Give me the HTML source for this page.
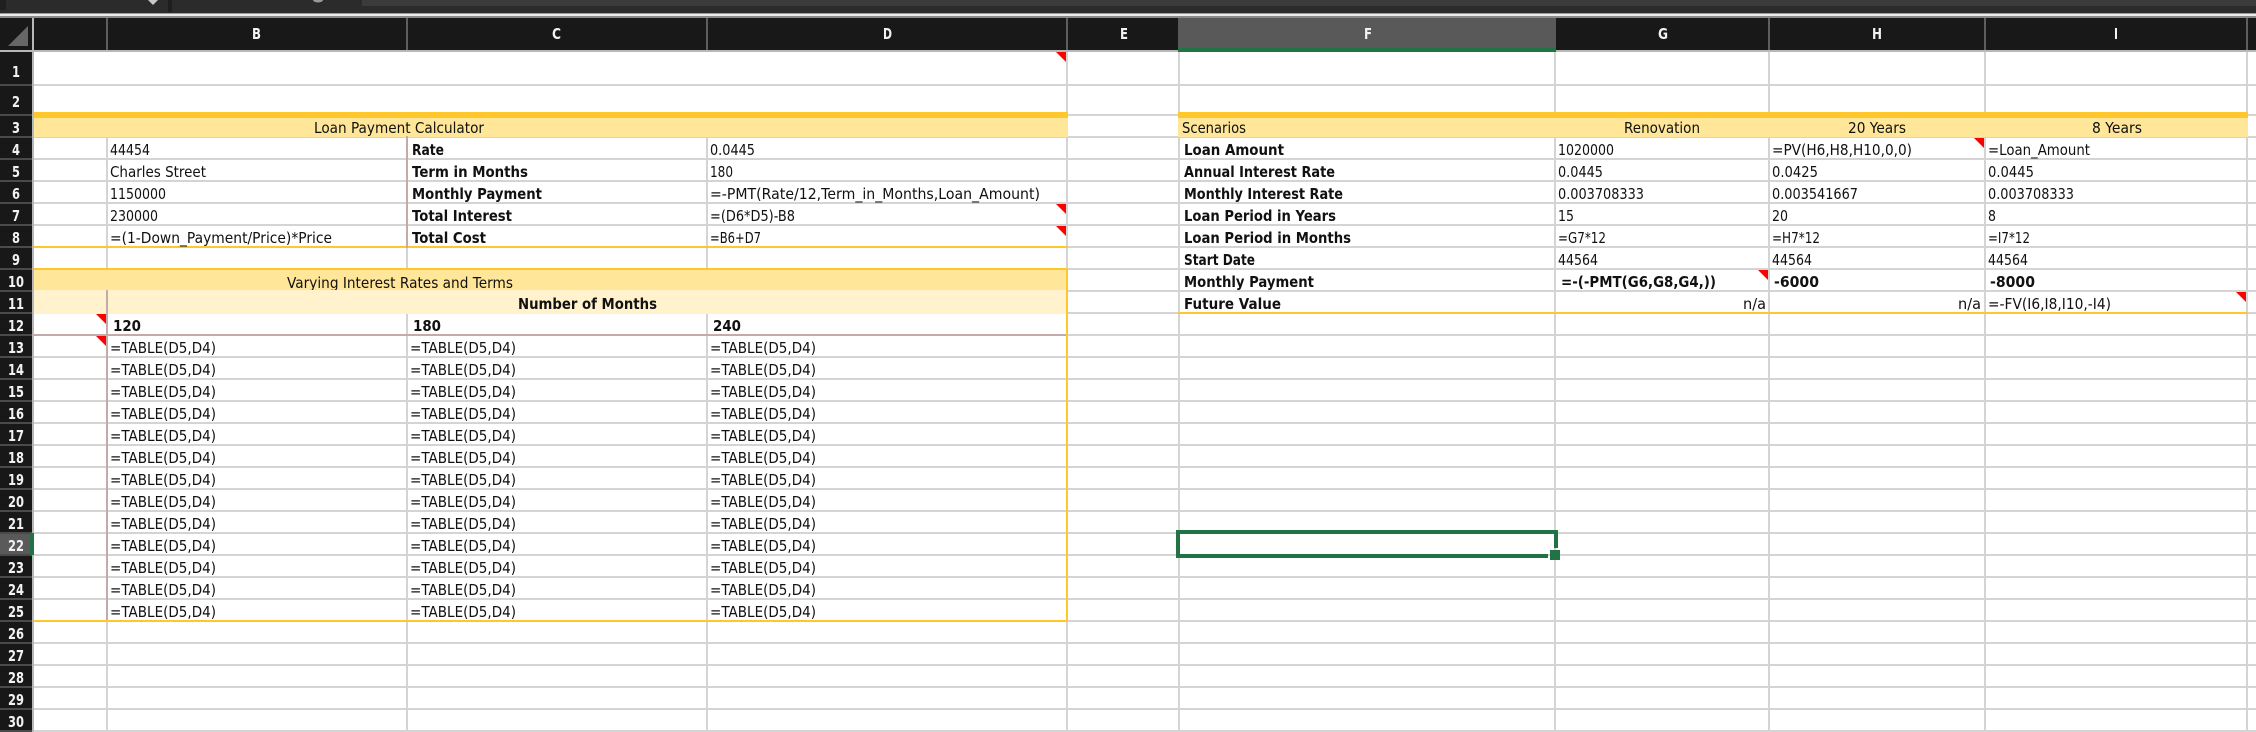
<!DOCTYPE html>
<html><head><meta charset="utf-8"><title>Loan Payment Calculator</title>
<style>
html,body{margin:0;padding:0;background:#fff;width:2256px;height:732px;overflow:hidden}
svg{display:block}
text{font-family:"DejaVu Sans","Liberation Sans",sans-serif;font-size:15px;fill:#111}
.b{font-weight:bold}
.h{font-weight:bold;fill:#f2f2f2}
</style></head><body>
<svg width="2256" height="732" viewBox="0 0 2256 732" xmlns="http://www.w3.org/2000/svg" lengthAdjust="spacingAndGlyphs">
<!-- top bar -->
<rect x="0" y="0" width="2256" height="13" fill="#2b2b2b"/>
<rect x="362" y="0" width="1894" height="6" fill="#3b3b3b"/>
<rect x="0" y="0" width="6" height="10" fill="#1f1f1f"/>
<rect x="168" y="0" width="4" height="12" fill="#1e1e1e"/>
<path d="M148 0h10l-5 5z" fill="#c8c8c8"/>
<ellipse cx="318" cy="0" rx="5" ry="2.5" fill="#999"/>
<rect x="0" y="13" width="2256" height="1" fill="#9a9a9a"/>
<rect x="0" y="14" width="2256" height="2" fill="#ececec"/>
<rect x="0" y="16" width="2256" height="2" fill="#8a8a8a"/>
<!-- col header -->
<rect x="0" y="18" width="2256" height="32" fill="#181818"/>
<rect x="1178" y="18" width="378" height="32" fill="#595959"/>
<rect x="0" y="50" width="2256" height="2" fill="#b8b8b8"/>
<rect x="1178" y="48" width="378" height="4" fill="#217346"/>
<path d="M8 46 28 26V46Z" fill="#676767"/>
<g fill="#5e5e5e">
<rect x="106" y="18" width="2" height="32"/><rect x="406" y="18" width="2" height="32"/><rect x="706" y="18" width="2" height="32"/><rect x="1066" y="18" width="2" height="32"/><rect x="1768" y="18" width="2" height="32"/><rect x="1984" y="18" width="2" height="32"/><rect x="2246" y="18" width="2" height="32"/>
</g>
<rect x="32" y="18" width="2" height="32" fill="#b8b8b8"/>
<!-- row header -->
<rect x="0" y="52" width="32" height="680" fill="#181818"/>
<rect x="32" y="52" width="2" height="680" fill="#b8b8b8"/>
<path d="M0 85H32M0 115H32M0 137H32M0 159H32M0 181H32M0 203H32M0 225H32M0 247H32M0 269H32M0 291H32M0 313H32M0 335H32M0 357H32M0 379H32M0 401H32M0 423H32M0 445H32M0 467H32M0 489H32M0 511H32M0 533H32M0 555H32M0 577H32M0 599H32M0 621H32M0 643H32M0 665H32M0 687H32M0 709H32M0 731H32" stroke="#4a4a4a" stroke-width="2" fill="none"/>
<rect x="0" y="534" width="30" height="20" fill="#5a5a5a"/>
<rect x="30" y="533" width="4" height="22" fill="#217346"/>
<!-- grid -->
<path d="M34 85H2256M34 115H2256M34 137H2256M34 159H2256M34 181H2256M34 203H2256M34 225H2256M34 247H2256M34 269H2256M34 291H2256M34 313H2256M34 335H2256M34 357H2256M34 379H2256M34 401H2256M34 423H2256M34 445H2256M34 467H2256M34 489H2256M34 511H2256M34 533H2256M34 555H2256M34 577H2256M34 599H2256M34 621H2256M34 643H2256M34 665H2256M34 687H2256M34 709H2256M34 731H2256" stroke="#d4d4d4" stroke-width="2" fill="none"/>
<path d="M107 137V732M407 137V732M707 137V732M1067 52V732M1179 52V732M1555 52V732M1769 52V732M1985 52V732M2247 52V732" stroke="#d4d4d4" stroke-width="2" fill="none"/>
<!-- fills left -->
<rect x="34" y="112" width="1034" height="6" fill="#ffc72c"/>
<rect x="34" y="118" width="1034" height="19" fill="#ffe699"/>
<rect x="34" y="246" width="1034" height="2" fill="#ffc72c"/>
<rect x="34" y="268" width="1034" height="2" fill="#ffc72c"/>
<rect x="34" y="270" width="1032" height="20" fill="#ffe699"/>
<rect x="34" y="290" width="1032" height="24" fill="#fff2cc"/>
<rect x="34" y="334" width="1032" height="2" fill="#c4aaaa"/>
<rect x="406" y="136" width="2" height="112" fill="#c4aaaa"/>
<rect x="106" y="290" width="2" height="331" fill="#c4aaaa"/>
<rect x="1066" y="268" width="2" height="354" fill="#ffc72c"/>
<rect x="34" y="620" width="1034" height="2" fill="#ffc72c"/>
<!-- fills right -->
<rect x="1178" y="112" width="1070" height="6" fill="#ffc72c"/>
<rect x="1178" y="118" width="1070" height="19" fill="#ffe699"/>
<rect x="1178" y="312" width="1070" height="2" fill="#ffc72c"/>
<!-- headers text -->
<g class="h">
<text class="h" x="252" y="39" textLength="9" lengthAdjust="spacingAndGlyphs">B</text>
<text class="h" x="552" y="39" textLength="9" lengthAdjust="spacingAndGlyphs">C</text>
<text class="h" x="883" y="39" textLength="9" lengthAdjust="spacingAndGlyphs">D</text>
<text class="h" x="1120" y="39" textLength="8" lengthAdjust="spacingAndGlyphs">E</text>
<text class="h" x="1364" y="39" textLength="8" lengthAdjust="spacingAndGlyphs">F</text>
<text class="h" x="1658" y="39" textLength="10" lengthAdjust="spacingAndGlyphs">G</text>
<text class="h" x="1872" y="39" textLength="10" lengthAdjust="spacingAndGlyphs">H</text>
<text class="h" x="2114" y="39" textLength="4" lengthAdjust="spacingAndGlyphs">I</text>
</g>
<text class="h" x="12" y="77" textLength="8" lengthAdjust="spacingAndGlyphs">1</text>
<text class="h" x="12" y="107" textLength="8" lengthAdjust="spacingAndGlyphs">2</text>
<text class="h" x="12" y="133" textLength="8" lengthAdjust="spacingAndGlyphs">3</text>
<text class="h" x="12" y="155" textLength="8" lengthAdjust="spacingAndGlyphs">4</text>
<text class="h" x="12" y="177" textLength="8" lengthAdjust="spacingAndGlyphs">5</text>
<text class="h" x="12" y="199" textLength="8" lengthAdjust="spacingAndGlyphs">6</text>
<text class="h" x="12" y="221" textLength="8" lengthAdjust="spacingAndGlyphs">7</text>
<text class="h" x="12" y="243" textLength="8" lengthAdjust="spacingAndGlyphs">8</text>
<text class="h" x="12" y="265" textLength="8" lengthAdjust="spacingAndGlyphs">9</text>
<text class="h" x="8" y="287" textLength="16" lengthAdjust="spacingAndGlyphs">10</text>
<text class="h" x="8" y="309" textLength="16" lengthAdjust="spacingAndGlyphs">11</text>
<text class="h" x="8" y="331" textLength="16" lengthAdjust="spacingAndGlyphs">12</text>
<text class="h" x="8" y="353" textLength="16" lengthAdjust="spacingAndGlyphs">13</text>
<text class="h" x="8" y="375" textLength="16" lengthAdjust="spacingAndGlyphs">14</text>
<text class="h" x="8" y="397" textLength="16" lengthAdjust="spacingAndGlyphs">15</text>
<text class="h" x="8" y="419" textLength="16" lengthAdjust="spacingAndGlyphs">16</text>
<text class="h" x="8" y="441" textLength="16" lengthAdjust="spacingAndGlyphs">17</text>
<text class="h" x="8" y="463" textLength="16" lengthAdjust="spacingAndGlyphs">18</text>
<text class="h" x="8" y="485" textLength="16" lengthAdjust="spacingAndGlyphs">19</text>
<text class="h" x="8" y="507" textLength="16" lengthAdjust="spacingAndGlyphs">20</text>
<text class="h" x="8" y="529" textLength="16" lengthAdjust="spacingAndGlyphs">21</text>
<text class="h" x="8" y="551" textLength="16" lengthAdjust="spacingAndGlyphs">22</text>
<text class="h" x="8" y="573" textLength="16" lengthAdjust="spacingAndGlyphs">23</text>
<text class="h" x="8" y="595" textLength="16" lengthAdjust="spacingAndGlyphs">24</text>
<text class="h" x="8" y="617" textLength="16" lengthAdjust="spacingAndGlyphs">25</text>
<text class="h" x="8" y="639" textLength="16" lengthAdjust="spacingAndGlyphs">26</text>
<text class="h" x="8" y="661" textLength="16" lengthAdjust="spacingAndGlyphs">27</text>
<text class="h" x="8" y="683" textLength="16" lengthAdjust="spacingAndGlyphs">28</text>
<text class="h" x="8" y="705" textLength="16" lengthAdjust="spacingAndGlyphs">29</text>
<text class="h" x="8" y="727" textLength="16" lengthAdjust="spacingAndGlyphs">30</text>
<!-- left table -->
<text x="314" y="133" textLength="170" lengthAdjust="spacingAndGlyphs">Loan Payment Calculator</text>
<text x="110" y="155" textLength="40" lengthAdjust="spacingAndGlyphs">44454</text>
<text x="110" y="177" textLength="96" lengthAdjust="spacingAndGlyphs">Charles Street</text>
<text x="110" y="199" textLength="56" lengthAdjust="spacingAndGlyphs">1150000</text>
<text x="110" y="221" textLength="48" lengthAdjust="spacingAndGlyphs">230000</text>
<text x="110" y="243" textLength="222" lengthAdjust="spacingAndGlyphs">=(1-Down_Payment/Price)*Price</text>
<text class="b" x="412" y="155" textLength="32" lengthAdjust="spacingAndGlyphs">Rate</text>
<text class="b" x="412" y="177" textLength="116" lengthAdjust="spacingAndGlyphs">Term in Months</text>
<text class="b" x="412" y="199" textLength="130" lengthAdjust="spacingAndGlyphs">Monthly Payment</text>
<text class="b" x="412" y="221" textLength="100" lengthAdjust="spacingAndGlyphs">Total Interest</text>
<text class="b" x="412" y="243" textLength="74" lengthAdjust="spacingAndGlyphs">Total Cost</text>
<text x="710" y="155" textLength="45" lengthAdjust="spacingAndGlyphs">0.0445</text>
<text x="710" y="177" textLength="23" lengthAdjust="spacingAndGlyphs">180</text>
<text x="710" y="199" textLength="330" lengthAdjust="spacingAndGlyphs">=-PMT(Rate/12,Term_in_Months,Loan_Amount)</text>
<text x="710" y="221" textLength="85" lengthAdjust="spacingAndGlyphs">=(D6*D5)-B8</text>
<text x="710" y="243" textLength="51" lengthAdjust="spacingAndGlyphs">=B6+D7</text>
<svg x="34" y="270" width="1032" height="20"><text x="253" y="18" textLength="226" lengthAdjust="spacingAndGlyphs">Varying Interest Rates and Terms</text></svg>
<text class="b" x="518" y="309" textLength="139" lengthAdjust="spacingAndGlyphs">Number of Months</text>
<text class="b" x="113" y="331" textLength="28" lengthAdjust="spacingAndGlyphs">120</text>
<text class="b" x="413" y="331" textLength="28" lengthAdjust="spacingAndGlyphs">180</text>
<text class="b" x="713" y="331" textLength="28" lengthAdjust="spacingAndGlyphs">240</text>
<g>
<text x="110" y="353" textLength="106" lengthAdjust="spacingAndGlyphs">=TABLE(D5,D4)</text><text x="410" y="353" textLength="106" lengthAdjust="spacingAndGlyphs">=TABLE(D5,D4)</text><text x="710" y="353" textLength="106" lengthAdjust="spacingAndGlyphs">=TABLE(D5,D4)</text>
<text x="110" y="375" textLength="106" lengthAdjust="spacingAndGlyphs">=TABLE(D5,D4)</text><text x="410" y="375" textLength="106" lengthAdjust="spacingAndGlyphs">=TABLE(D5,D4)</text><text x="710" y="375" textLength="106" lengthAdjust="spacingAndGlyphs">=TABLE(D5,D4)</text>
<text x="110" y="397" textLength="106" lengthAdjust="spacingAndGlyphs">=TABLE(D5,D4)</text><text x="410" y="397" textLength="106" lengthAdjust="spacingAndGlyphs">=TABLE(D5,D4)</text><text x="710" y="397" textLength="106" lengthAdjust="spacingAndGlyphs">=TABLE(D5,D4)</text>
<text x="110" y="419" textLength="106" lengthAdjust="spacingAndGlyphs">=TABLE(D5,D4)</text><text x="410" y="419" textLength="106" lengthAdjust="spacingAndGlyphs">=TABLE(D5,D4)</text><text x="710" y="419" textLength="106" lengthAdjust="spacingAndGlyphs">=TABLE(D5,D4)</text>
<text x="110" y="441" textLength="106" lengthAdjust="spacingAndGlyphs">=TABLE(D5,D4)</text><text x="410" y="441" textLength="106" lengthAdjust="spacingAndGlyphs">=TABLE(D5,D4)</text><text x="710" y="441" textLength="106" lengthAdjust="spacingAndGlyphs">=TABLE(D5,D4)</text>
<text x="110" y="463" textLength="106" lengthAdjust="spacingAndGlyphs">=TABLE(D5,D4)</text><text x="410" y="463" textLength="106" lengthAdjust="spacingAndGlyphs">=TABLE(D5,D4)</text><text x="710" y="463" textLength="106" lengthAdjust="spacingAndGlyphs">=TABLE(D5,D4)</text>
<text x="110" y="485" textLength="106" lengthAdjust="spacingAndGlyphs">=TABLE(D5,D4)</text><text x="410" y="485" textLength="106" lengthAdjust="spacingAndGlyphs">=TABLE(D5,D4)</text><text x="710" y="485" textLength="106" lengthAdjust="spacingAndGlyphs">=TABLE(D5,D4)</text>
<text x="110" y="507" textLength="106" lengthAdjust="spacingAndGlyphs">=TABLE(D5,D4)</text><text x="410" y="507" textLength="106" lengthAdjust="spacingAndGlyphs">=TABLE(D5,D4)</text><text x="710" y="507" textLength="106" lengthAdjust="spacingAndGlyphs">=TABLE(D5,D4)</text>
<text x="110" y="529" textLength="106" lengthAdjust="spacingAndGlyphs">=TABLE(D5,D4)</text><text x="410" y="529" textLength="106" lengthAdjust="spacingAndGlyphs">=TABLE(D5,D4)</text><text x="710" y="529" textLength="106" lengthAdjust="spacingAndGlyphs">=TABLE(D5,D4)</text>
<text x="110" y="551" textLength="106" lengthAdjust="spacingAndGlyphs">=TABLE(D5,D4)</text><text x="410" y="551" textLength="106" lengthAdjust="spacingAndGlyphs">=TABLE(D5,D4)</text><text x="710" y="551" textLength="106" lengthAdjust="spacingAndGlyphs">=TABLE(D5,D4)</text>
<text x="110" y="573" textLength="106" lengthAdjust="spacingAndGlyphs">=TABLE(D5,D4)</text><text x="410" y="573" textLength="106" lengthAdjust="spacingAndGlyphs">=TABLE(D5,D4)</text><text x="710" y="573" textLength="106" lengthAdjust="spacingAndGlyphs">=TABLE(D5,D4)</text>
<text x="110" y="595" textLength="106" lengthAdjust="spacingAndGlyphs">=TABLE(D5,D4)</text><text x="410" y="595" textLength="106" lengthAdjust="spacingAndGlyphs">=TABLE(D5,D4)</text><text x="710" y="595" textLength="106" lengthAdjust="spacingAndGlyphs">=TABLE(D5,D4)</text>
<text x="110" y="617" textLength="106" lengthAdjust="spacingAndGlyphs">=TABLE(D5,D4)</text><text x="410" y="617" textLength="106" lengthAdjust="spacingAndGlyphs">=TABLE(D5,D4)</text><text x="710" y="617" textLength="106" lengthAdjust="spacingAndGlyphs">=TABLE(D5,D4)</text>
</g>
<!-- right table -->
<text x="1182" y="133" textLength="64" lengthAdjust="spacingAndGlyphs">Scenarios</text>
<text x="1624" y="133" textLength="76" lengthAdjust="spacingAndGlyphs">Renovation</text>
<text x="1848" y="133" textLength="58" lengthAdjust="spacingAndGlyphs">20 Years</text>
<text x="2092" y="133" textLength="50" lengthAdjust="spacingAndGlyphs">8 Years</text>
<text class="b" x="1184" y="155" textLength="100" lengthAdjust="spacingAndGlyphs">Loan Amount</text>
<text class="b" x="1184" y="177" textLength="151" lengthAdjust="spacingAndGlyphs">Annual Interest Rate</text>
<text class="b" x="1184" y="199" textLength="159" lengthAdjust="spacingAndGlyphs">Monthly Interest Rate</text>
<text class="b" x="1184" y="221" textLength="152" lengthAdjust="spacingAndGlyphs">Loan Period in Years</text>
<text class="b" x="1184" y="243" textLength="167" lengthAdjust="spacingAndGlyphs">Loan Period in Months</text>
<text class="b" x="1184" y="265" textLength="71" lengthAdjust="spacingAndGlyphs">Start Date</text>
<text class="b" x="1184" y="287" textLength="130" lengthAdjust="spacingAndGlyphs">Monthly Payment</text>
<text class="b" x="1184" y="309" textLength="97" lengthAdjust="spacingAndGlyphs">Future Value</text>
<text x="1558" y="155" textLength="56" lengthAdjust="spacingAndGlyphs">1020000</text>
<text x="1558" y="177" textLength="45" lengthAdjust="spacingAndGlyphs">0.0445</text>
<text x="1558" y="199" textLength="86" lengthAdjust="spacingAndGlyphs">0.003708333</text>
<text x="1558" y="221" textLength="16" lengthAdjust="spacingAndGlyphs">15</text>
<text x="1558" y="243" textLength="48" lengthAdjust="spacingAndGlyphs">=G7*12</text>
<text x="1558" y="265" textLength="40" lengthAdjust="spacingAndGlyphs">44564</text>
<text class="b" x="1561" y="287" textLength="155" lengthAdjust="spacingAndGlyphs">=-(-PMT(G6,G8,G4,))</text>
<text x="1743" y="309" textLength="23" lengthAdjust="spacingAndGlyphs">n/a</text>
<text x="1772" y="155" textLength="140" lengthAdjust="spacingAndGlyphs">=PV(H6,H8,H10,0,0)</text>
<text x="1772" y="177" textLength="46" lengthAdjust="spacingAndGlyphs">0.0425</text>
<text x="1772" y="199" textLength="86" lengthAdjust="spacingAndGlyphs">0.003541667</text>
<text x="1772" y="221" textLength="16" lengthAdjust="spacingAndGlyphs">20</text>
<text x="1772" y="243" textLength="48" lengthAdjust="spacingAndGlyphs">=H7*12</text>
<text x="1772" y="265" textLength="40" lengthAdjust="spacingAndGlyphs">44564</text>
<text class="b" x="1774" y="287" textLength="45" lengthAdjust="spacingAndGlyphs">-6000</text>
<text x="1958" y="309" textLength="23" lengthAdjust="spacingAndGlyphs">n/a</text>
<text x="1988" y="155" textLength="102" lengthAdjust="spacingAndGlyphs">=Loan_Amount</text>
<text x="1988" y="177" textLength="46" lengthAdjust="spacingAndGlyphs">0.0445</text>
<text x="1988" y="199" textLength="86" lengthAdjust="spacingAndGlyphs">0.003708333</text>
<text x="1988" y="221" textLength="8" lengthAdjust="spacingAndGlyphs">8</text>
<text x="1988" y="243" textLength="42" lengthAdjust="spacingAndGlyphs">=I7*12</text>
<text x="1988" y="265" textLength="40" lengthAdjust="spacingAndGlyphs">44564</text>
<text class="b" x="1990" y="287" textLength="45" lengthAdjust="spacingAndGlyphs">-8000</text>
<text x="1988" y="309" textLength="123" lengthAdjust="spacingAndGlyphs">=-FV(I6,I8,I10,-I4)</text>
<!-- comment triangles -->
<g fill="#ff0000">
<path d="M1056 52H1066V62Z"/>
<path d="M1056 204H1066V214Z"/>
<path d="M1056 226H1066V236Z"/>
<path d="M1974 138H1984V148Z"/>
<path d="M1758 270H1768V280Z"/>
<path d="M2236 292H2246V302Z"/>
<path d="M96 314H106V324Z"/>
<path d="M96 336H106V346Z"/>
</g>
<!-- selection -->
<path d="M1176 530H1558V548H1554V534H1180V554H1548V558H1176Z" fill="#217346"/>
<rect x="1550" y="550" width="10" height="10" fill="#217346"/>
</svg>
</body></html>
